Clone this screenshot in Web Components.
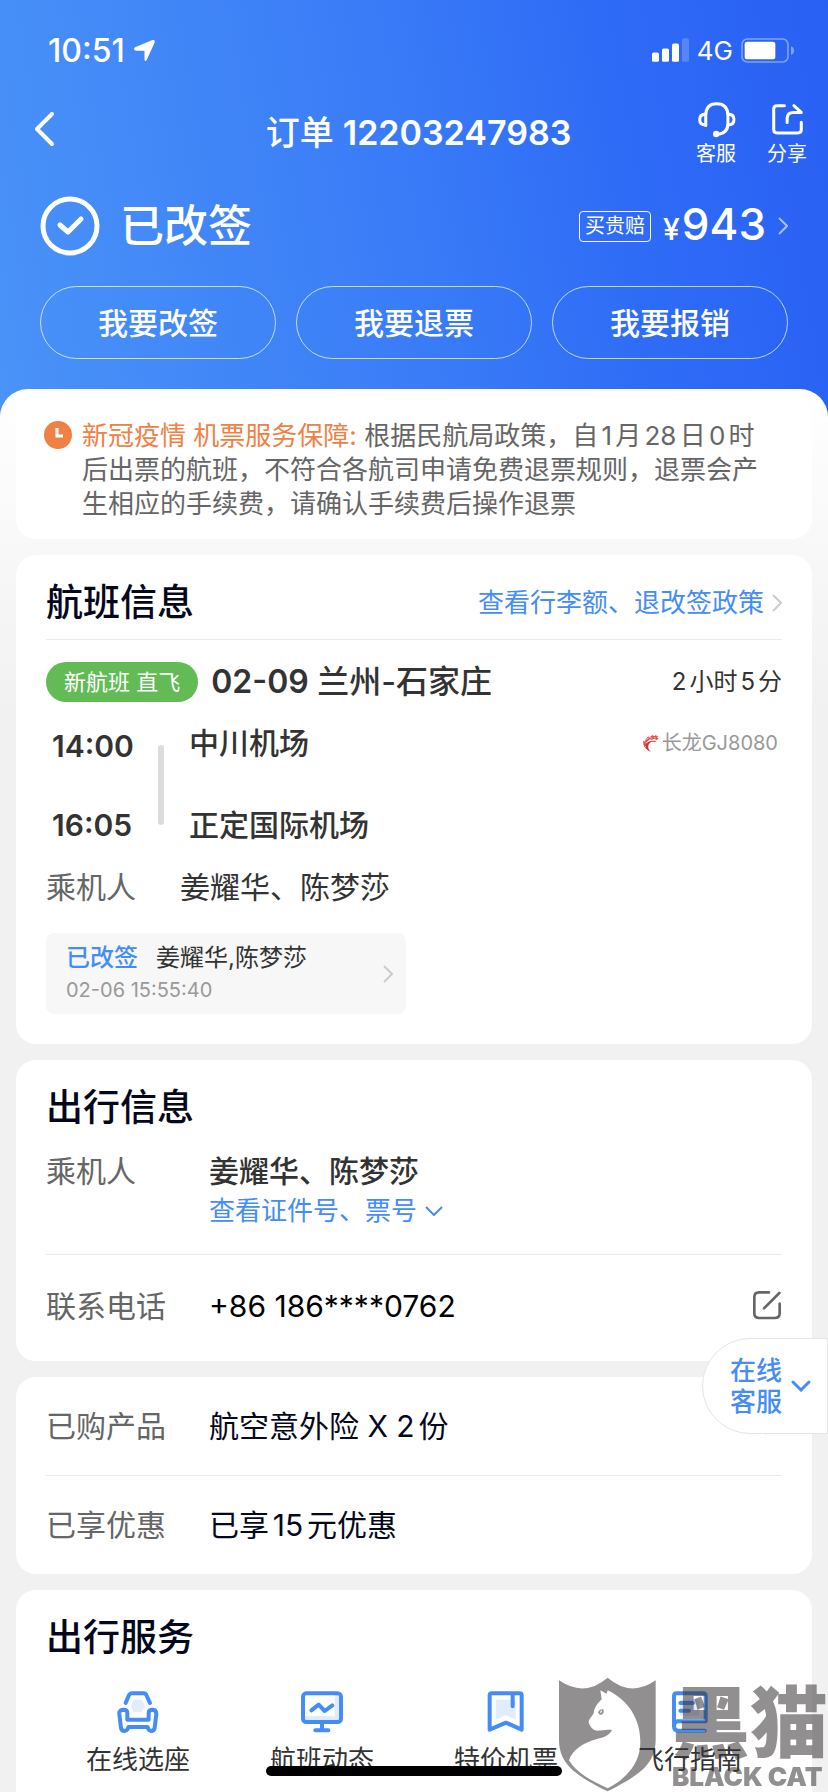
<!DOCTYPE html>
<html lang="zh-CN">
<head>
<meta charset="utf-8">
<meta name="viewport" content="width=device-width, initial-scale=1">
<title>订单 12203247983</title>
<style>
  html {
    font-family: Inter, "Noto Sans CJK SC", sans-serif;
    text-autospace: normal;
    color: #333;
  }
  body {
    margin: 0;
    height: 100vh;
    overflow: hidden;
    background: #f1f1f1;
  }
</style>
</head>
<body>
<order-page>
  <order-header slot="header" order="12203247983" status="已改签" price="943">
    <pill-button>我要改签</pill-button>
    <pill-button>我要退票</pill-button>
    <pill-button>我要报销</pill-button>
  </order-header>

  <notice-card>
    <span slot="topic">新冠疫情 机票服务保障:</span>
    根据民航局政策，自1月28日0时后出票的航班，不符合各航司申请免费退票规则，退票会产生相应的手续费，请确认手续费后操作退票
  </notice-card>

  <info-card heading="航班信息" divided>
    <text-link slot="extra" arrow="right">查看行李额、退改签政策</text-link>
    <flight-detail></flight-detail>
  </info-card>

  <info-card heading="出行信息">
    <info-row label="乘机人" class="people">
      <b>姜耀华、陈梦莎</b>
      <text-link arrow="down">查看证件号、票号</text-link>
    </info-row>
    <info-row label="联系电话" class="phone">
      +86 186****0762
      <edit-button slot="end"></edit-button>
    </info-row>
  </info-card>

  <info-card class="dark">
    <info-row label="已购产品">航空意外险 X 2份<chevron-icon slot="end"></chevron-icon></info-row>
    <info-row label="已享优惠">已享15元优惠</info-row>
  </info-card>

  <info-card heading="出行服务">
    <service-list></service-list>
  </info-card>
</order-page>
<service-float></service-float>
<cat-watermark></cat-watermark>
<home-bar></home-bar>

<script>
function define(name, html, setup) {
  const template = document.createElement('template');
  template.innerHTML = html;

  customElements.define(name, class extends HTMLElement {
    constructor() {
      super();
      this.attachShadow({ mode: 'open' });
      this.shadowRoot.appendChild(template.content.cloneNode(true));
    }

    connectedCallback() {
      if (setup) setup(this, this.shadowRoot);
    }
  });
}

define('order-page', `
  <style>
    :host { display: block; }
    main {
      display: flex;
      flex-direction: column;
      gap: 16px;
      position: relative;
      margin-top: -28px;
      padding: 8px 16px;
      border-radius: 28px 28px 0 0;
      background: linear-gradient(#fff, #f1f1f1 320px);
    }
    ::slotted(.dark) { color: #05081c; }
  </style>
  <slot name="header"></slot>
  <main><slot></slot></main>
`);

define('chevron-icon', `
  <style>
    :host { display: inline-flex; color: #ccc; }
    svg { width: 10px; height: 18px; }
    :host([dir-down]) { margin-left: 4px; }
    :host([dir-down]) svg { transform: rotate(90deg); }
  </style>
  <svg viewBox="0 0 10 18" fill="none" stroke="currentColor" stroke-width="2"><path d="M1 1l8 8-8 8"/></svg>
`);

define('status-bar', `
  <style>
    :host {
      display: flex;
      align-items: center;
      gap: 8px;
      height: 100px;
      padding: 0 34px 0 48px;
      color: #fff;
    }
    time { font-size: 32px; font-weight: 500; }
    .net { font-size: 26px; }
    .arrow { margin-right: auto; }
  </style>
  <time>10:51</time>
  <svg class="arrow" width="23" height="23" viewBox="410 117 64 66"><path d="M415 141l50-21q8-2 6 7l-23 51q-4 5-6-1v-26h-25q-9-4-2-10z" fill="#fff"/></svg>
  <svg width="37" height="24" viewBox="717 113 111 71" fill="#fff">
    <rect x="717" y="156" width="21" height="28" rx="5"/>
    <rect x="747" y="144" width="21" height="40" rx="5"/>
    <rect x="777" y="129" width="21" height="55" rx="5"/>
    <rect x="807" y="113" width="21" height="71" rx="5" opacity=".2"/>
  </svg>
  <span class="net">4G</span>
  <svg width="53" height="25" viewBox="981 111 159 75">
    <rect x="984" y="114" width="138" height="69" rx="16" fill="none" stroke="#fff" stroke-width="5" opacity=".4"/>
    <rect x="992" y="122" width="92" height="53" rx="8" fill="#fff"/>
    <path d="M1131 136q9 3 9 13t-9 12z" fill="#fff" opacity=".4"/>
  </svg>
`);

define('pill-button', `
  <style>
    :host { display: block; flex: 1; }
    button {
      width: 100%;
      height: 73px;
      padding-bottom: 4px;
      border: 1px solid rgba(255, 255, 255, .7);
      border-radius: 37px;
      background: none;
      color: #fff;
      font: 500 30px Inter, "Noto Sans CJK SC", sans-serif;
    }
  </style>
  <button type="button"><slot></slot></button>
`);

define('order-header', `
  <style>
    :host {
      display: block;
      padding-bottom: 58px;
      background: linear-gradient(80deg, #4a93f8, #3a7cf7 48%, #2e6bf6 75%, #2960f4);
      color: #fff;
    }
    nav {
      display: grid;
      grid-template-columns: 1fr auto 1fr;
      align-items: center;
      height: 65px;
      padding: 0 21px 0 30px;
    }
    button {
      padding: 0;
      border: 0;
      background: none;
      color: #fff;
      font: 20px/22px Inter, "Noto Sans CJK SC", sans-serif;
    }
    .back { align-self: start; justify-self: start; display: flex; padding-top: 9px; }
    h1 { margin: 0; font-size: 34px; font-weight: 500; line-height: 40px; }
    h1 span { font-weight: 600; }
    .tools { display: flex; justify-content: flex-end; gap: 31px; }
    .tools button { display: flex; flex-direction: column; align-items: center; gap: 4px; }
    svg { fill: none; stroke: #fff; stroke-linecap: round; stroke-linejoin: round; }
    .summary {
      display: flex;
      align-items: center;
      height: 60px;
      padding: 0 40px;
      margin: 31px 0 30px;
    }
    .status { flex: 1; margin-left: 20px; font-size: 44px; font-weight: 500; line-height: 52px; }
    .tag {
      padding: 0 5px;
      border: 1px solid #fff;
      border-radius: 4px;
      font-size: 20px;
      line-height: 29px;
    }
    .price { margin: 0 12px; font-size: 44px; font-weight: 500; line-height: 52px; }
    .price small { margin-right: 2px; font-size: 30px; }
    chevron-icon { color: rgba(255, 255, 255, .6); }
    .actions { display: flex; gap: 20px; padding: 0 40px; }
  </style>
  <status-bar></status-bar>
  <nav>
    <button class="back" type="button" aria-label="返回">
      <svg width="30" height="40" viewBox="30 109 30 40" stroke-width="4"><path d="M52 114L37 129l15 15"/></svg>
    </button>
    <h1>订单 <span id="order"></span></h1>
    <div class="tools">
      <button type="button">
        <svg width="39" height="39" viewBox="848 300 116 116" stroke-width="9">
          <path d="M874 376v-31q1-34 32-34 33 0 34 34v25q0 30-32 32"/>
          <path d="M874 342q-18 0-18 16t18 16M940 342q18 0 18 16t-18 16"/>
          <circle cx="905" cy="401" r="5"/>
        </svg>
        客服
      </button>
      <button type="button">
        <svg width="39" height="39" viewBox="1061 300 116 116" stroke-width="9">
          <path d="M1110 317h-22q-10 0-10 10v61q0 10 10 10h62q10 0 10-10v-22"/>
          <path d="M1118 367v-13q1-17 18-17h24l-22-20"/>
        </svg>
        分享
      </button>
    </div>
  </nav>
  <div class="summary">
    <svg width="60" height="60" viewBox="0 0 60 60"><circle cx="30" cy="30" r="27" stroke-width="5"/><path d="M20 29l8 7 13-13" stroke-width="5"/></svg>
    <div class="status"></div>
    <span class="tag">买贵赔</span>
    <div class="price"><small>¥</small><span id="price"></span></div>
    <chevron-icon></chevron-icon>
  </div>
  <div class="actions"><slot></slot></div>
`, (el, root) => {
  root.querySelector('#order').textContent = el.getAttribute('order');
  root.querySelector('.status').textContent = el.getAttribute('status');
  root.querySelector('#price').textContent = el.getAttribute('price');
});

define('notice-card', `
  <style>
    :host {
      display: flex;
      gap: 10px;
      padding: 22px 40px 18px 28px;
      border-radius: 20px;
      background: #fff;
      color: #666;
    }
    svg { flex: none; margin-top: 2px; }
    p { margin: 0; font-size: 26px; line-height: 34px; }
    ::slotted([slot=topic]) { color: #f08144; text-autospace: no-autospace; }
  </style>
  <svg width="28" height="28" viewBox="0 0 28 28"><circle cx="14" cy="14" r="14" fill="#f08144"/><path d="M13 7v8h6" fill="none" stroke="#fff" stroke-width="3"/></svg>
  <p><slot name="topic"></slot> <slot></slot></p>
`);

define('text-link', `
  <style>
    :host { display: flex; }
    a {
      display: inline-flex;
      align-items: center;
      gap: 8px;
      color: #448cf7;
      font-size: 26px;
      font-weight: 400;
      line-height: 40px;
      text-decoration: none;
    }
    :host([arrow=down]) chevron-icon { color: #448cf7; }
  </style>
  <a href="#"><slot></slot><chevron-icon></chevron-icon></a>
`, (el, root) => {
  root.querySelector('chevron-icon').toggleAttribute('dir-down', el.getAttribute('arrow') === 'down');
});

define('info-card', `
  <style>
    :host {
      display: block;
      padding: 0 30px;
      border-radius: 20px;
      background: #fff;
    }
    header {
      display: flex;
      justify-content: space-between;
      align-items: center;
      padding-top: 24px;
    }
    :host(:not([heading])) header { display: none; }
    :host([divided]) header { padding-bottom: 12px; border-bottom: 1px solid #ebebeb; }
    h2 { margin: 0; color: #05081c; font-size: 37px; font-weight: 500; line-height: 48px; }
    ::slotted(.people) { --row-pad: 19px 0 23px; }
    ::slotted(.phone) { --row-pad: 31px 0 35px; color: #000; }
    ::slotted(info-row:not(:last-child)) { border-bottom: 1px solid #ebebeb; }
  </style>
  <header><h2></h2><slot name="extra"></slot></header>
  <slot></slot>
`, (el, root) => {
  root.querySelector('h2').textContent = el.getAttribute('heading') || '';
});

define('info-row', `
  <style>
    :host {
      display: flex;
      align-items: flex-start;
      padding: var(--row-pad, 29px 0);
      font-size: 30px;
      line-height: 40px;
    }
    .label { flex: none; width: 163px; color: #666; }
    .value { flex: 1; }
    ::slotted(b) { display: block; font-weight: 500; }
    ::slotted(chevron-icon) { align-self: center; margin-right: 8px; }
  </style>
  <div class="label"></div>
  <div class="value"><slot></slot></div>
  <slot name="end"></slot>
`, (el, root) => {
  root.querySelector('.label').textContent = el.getAttribute('label');
});

define('edit-button', `
  <style>
    :host { display: block; }
    button { display: flex; padding: 4px 0; border: 0; background: none; }
  </style>
  <button type="button" aria-label="修改联系电话">
    <svg width="30" height="30" viewBox="936 146 90 90" fill="none" stroke="#666" stroke-width="8" stroke-linecap="round" stroke-linejoin="round">
      <path d="M987 153h-30q-14 0-14 14v49q0 14 14 14h48q14 0 14-14v-29M1018 155l-46 46"/>
    </svg>
  </button>
`);

define('flight-detail', `
  <style>
    :host { display: block; padding: 22px 0 30px; font-size: 30px; line-height: 40px; }
    .route { display: flex; align-items: center; gap: 13px; height: 40px; }
    .pill {
      padding: 0 18px;
      border-radius: 20px;
      background: #62bb55;
      color: #fff;
      font-size: 22px;
    }
    h3 { flex: 1; margin: 0; font-size: 32px; font-weight: 500; }
    h3 b { font-weight: 600; }
    .length { font-size: 24px; }
    .trip { display: flex; height: 122px; margin-top: 21px; padding-left: 6px; }
    .times, .places { display: flex; flex-direction: column; justify-content: space-between; }
    .times { width: 106px; padding-top: 3px; font-weight: 600; }
    .line { width: 6px; margin: 22px 25px 20px 0; border-radius: 3px; background: #dcdcdc; }
    .places { flex: 1; font-weight: 500; }
    .airline {
      display: flex;
      align-self: flex-start;
      align-items: center;
      gap: 3px;
      margin-right: 4px;
      color: #999;
      font-size: 20px;
      text-autospace: no-autospace;
    }
    .guests { display: flex; margin: 22px 0 26px; }
    .guests span:first-child { width: 134px; color: #666; }
    .record {
      display: flex;
      align-items: center;
      justify-content: space-between;
      box-sizing: border-box;
      width: 360px;
      height: 81px;
      padding: 0 13px 0 20px;
      border: 0;
      border-radius: 8px;
      background: #f7f7f7;
      color: #333;
      font: 24px/32px Inter, "Noto Sans CJK SC", sans-serif;
      text-align: left;
      text-autospace: no-autospace;
    }
    .record b { margin-right: 18px; color: #448cf7; font-weight: 500; }
    .record time { display: block; color: #999; font-size: 20px; }
  </style>
  <div class="route">
    <span class="pill">新航班 直飞</span>
    <h3><b>02-09</b> 兰州-石家庄</h3>
    <span class="length">2小时5分</span>
  </div>
  <div class="trip">
    <div class="times"><time>14:00</time><time>16:05</time></div>
    <div class="line"></div>
    <div class="places"><span>中川机场</span><span>正定国际机场</span></div>
    <div class="airline">
      <svg width="16" height="18" viewBox="683 286 48 54" fill="#d9302c">
        <path d="M708 339c-12-5-12-22-2-28 6-4 14 1 16-4-12-3-26 0-30 10-3 10 4 21 16 22z"/>
        <path d="M699 334c-12-4-17-16-15-28l5 3c1-8 6-14 13-16l-2 5 12-9 4 4 7-5v5l6-2-4 7 5 1-5 5-9-4-7 4-6-2-8 8-2 8-3 6z" opacity=".85"/>
        <path d="M692 303l8-5M704 297l7 2M716 296l5 3M690 314l5-5" stroke="#fff" stroke-width="2"/>
      </svg>
      长龙GJ8080
    </div>
  </div>
  <div class="guests"><span>乘机人</span><span>姜耀华、陈梦莎</span></div>
  <button class="record" type="button">
    <span><b>已改签</b>姜耀华,陈梦莎<time>02-06 15:55:40</time></span>
    <chevron-icon></chevron-icon>
  </button>
`);

define('service-list', `
  <style>
    :host { display: grid; grid-template-columns: repeat(4, 1fr); padding: 29px 0 34px; }
    a {
      display: flex;
      flex-direction: column;
      align-items: center;
      gap: 10px;
      color: #333;
      font-size: 26px;
      line-height: 34px;
      text-decoration: none;
    }
    svg {
      width: 42px;
      height: 42px;
      fill: none;
      stroke: #448cf7;
      stroke-width: 12;
      stroke-linecap: round;
      stroke-linejoin: round;
    }
    .pale { fill: #e1ecfc; stroke: none; }
  </style>
  <a href="#">
    <svg viewBox="350 94 126 126">
      <path class="pale" d="M400 120h24l10 19-10 19h-24l-9-19z"/>
      <path d="M376 130l10-24q3-5 8-5h36q6 0 8 5l11 24"/>
      <path d="M381 180v-20q0-10-12-10-13 1-12 13l5 42q2 9 11 9 9-1 11-12h58q2 11 10 12 9 0 11-9l5-42q0-12-11-13-12 0-12 10v20z"/>
    </svg>
    在线选座
  </a>
  <a href="#">
    <svg viewBox="903 94 126 126">
      <path class="pale" d="M1004 105h16v78H912v-14h92z"/>
      <rect x="909" y="101" width="114" height="86" rx="10"/>
      <path d="M934 152l22-17 18 19 23-17M966 190v22M946 212h39"/>
    </svg>
    航班动态
  </a>
  <a href="#">
    <svg viewBox="214 94 126 126">
      <path class="pale" d="M246 120h60v60l-29-14-31 14z"/>
      <path d="M234 101h84q6 0 6 6v103l-47-21-49 21V107q0-6 6-6zM297 104v36"/>
    </svg>
    特价机票
  </a>
  <a href="#">
    <svg viewBox="767 94 126 126">
      <path class="pale" d="M800 120h58v48h-58z"/>
      <path d="M782 200v-91q0-8 8-8h79q8 0 8 8v76h-84q-11 1-11 14 0 14 12 14h80M801 130h38M801 153h26"/>
    </svg>
    飞行指南
  </a>
`);

/* customer service tab stuck to the right edge */
define('service-float', `
  <style>
    :host { position: fixed; right: 0; top: 1338px; }
    button {
      display: flex;
      align-items: center;
      gap: 9px;
      height: 96px;
      padding: 0 16px 0 27px;
      border: 1px solid #e4e4e4;
      border-radius: 48px 0 0 48px;
      background: #fff;
      color: #448cf7;
      font: 500 26px/31px Inter, "Noto Sans CJK SC", sans-serif;
    }
  </style>
  <button type="button">
    <span>在线<br>客服</span>
    <svg width="20" height="12" viewBox="0 0 20 12" fill="none" stroke="#448cf7" stroke-width="3" stroke-linecap="round"><path d="M2 2l8 8 8-8"/></svg>
  </button>
`);

define('cat-watermark', `
  <style>
    :host {
      display: flex;
      align-items: flex-end;
      gap: 16px;
      position: fixed;
      right: 0;
      bottom: 0;
      color: #373333;
      opacity: .55;
      pointer-events: none;
      white-space: nowrap;
    }
    .name { font-size: 78px; font-weight: 900; line-height: 76px; }
    .latin { font-size: 26px; font-weight: 900; line-height: 30px; }
  </style>
  <svg width="97" height="115" viewBox="436 50 291 345" fill="currentColor" fill-rule="evenodd">
    <path d="M436 60q76 52 146-8 70 60 144 8v178c0 78-58 110-144 155-88-45-146-77-146-155z
      M560 90l4 27c-14 14-22 24-24 42-6 12-16 18-15 28 6 15 15 23 26 24 14 0 28-5 44-2-9 17-25 22-45 27-42 12-72 30-84 64 22 38 65 60 116 84 20-11 35-20 50-35 34-32 48-65 48-105 0-66-34-123-98-154l-3 10z"/>
    <path d="M553 156q5-10 16-9 4 12-7 17-7-1-9-8zm7 3q7-3 4-10-6 4-4 10z"/>
  </svg>
  <div>
    <div class="name">黑猫</div>
    <div class="latin">BLACK CAT</div>
  </div>
`);

define('home-bar', `
  <style>
    :host {
      position: fixed;
      left: 50%;
      bottom: 16px;
      width: 296px;
      height: 10px;
      margin-left: -148px;
      border-radius: 5px;
      background: #000;
    }
  </style>
`);
</script>
</body>
</html>
